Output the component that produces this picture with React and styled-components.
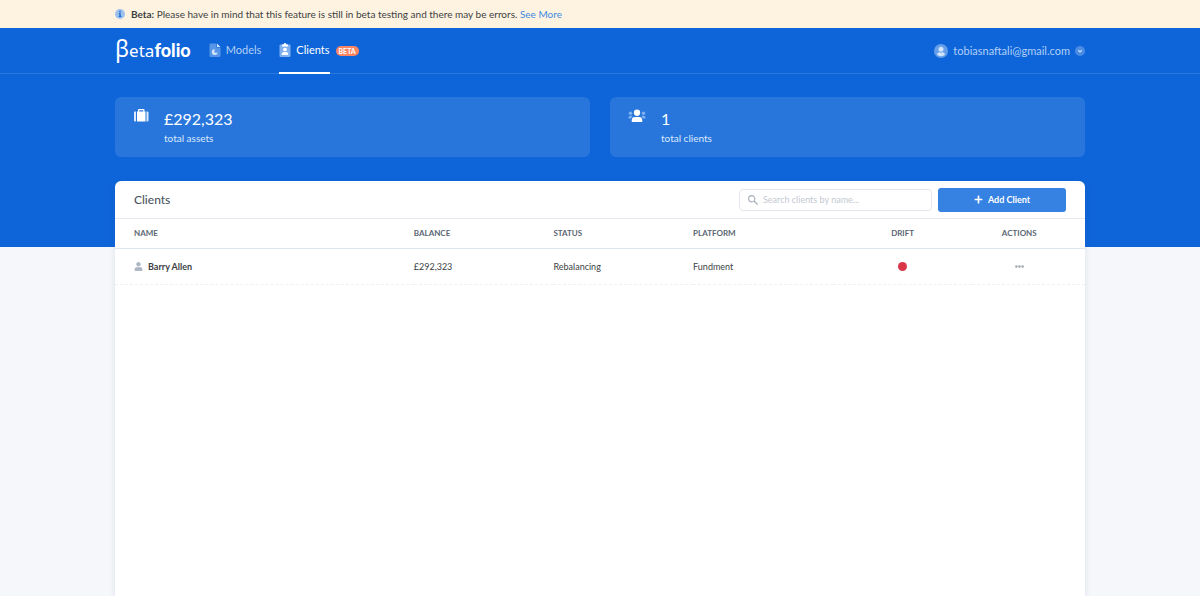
import { useState } from "react";
import styled, { createGlobalStyle } from "styled-components";
import { FaPlus, FaUser, FaEllipsisH } from "react-icons/fa";

const GlobalStyle = createGlobalStyle`
  * {
    box-sizing: border-box;
  }
  body {
    margin: 0;
    background: #f5f7fb;
    color: #3b3f44;
    font-family: Lato, "Liberation Sans", sans-serif;
    font-size: 10px;
  }
  button, input {
    font-family: inherit;
  }
`;

const Page = styled.div`
  display: flex;
  flex-direction: column;
  min-height: 100vh;
`;

const Container = styled.div`
  width: 100%;
  max-width: 970px;
  margin: 0 auto;
`;

const Banner = styled.div`
  background: #fef3e0;
`;

const BannerContent = styled(Container)`
  display: flex;
  align-items: center;
  gap: 6px;
  height: 28px;
  font-size: 10px;
  line-height: 16px;

  a {
    color: #3f8ae0;
    text-decoration: none;
  }
`;

const Hero = styled.div`
  height: 219px;
  background: #0e65d9;
`;

const Header = styled.header`
  border-bottom: 1px solid #2b77de;
`;

const HeaderContent = styled(Container)`
  display: flex;
  align-items: center;
  height: 45px;
`;

const Logo = styled.a`
  display: flex;
  align-items: baseline;
  margin-right: 18px;
  padding-bottom: 2px;
  color: #fff;
  font-family: "Noto Sans", sans-serif;
  font-size: 17px;
  font-weight: 400;
  line-height: 24px;
  text-decoration: none;

  strong {
    font-family: Lato, sans-serif;
    font-size: 18px;
    font-weight: 900;
  }
`;

const LogoBeta = styled.span`
  font-size: 23px;
`;

const Nav = styled.nav`
  display: flex;
  align-self: stretch;
  gap: 18px;
`;

const NavLink = styled.a`
  display: flex;
  align-items: center;
  gap: 5px;
  margin-bottom: -1px;
  border-bottom: 2px solid ${(props) => (props.$active ? "#fff" : "transparent")};
  color: ${(props) => (props.$active ? "#fff" : "#b1d0f6")};
  font-size: 11px;
  line-height: 16px;
  text-decoration: none;
`;

const Badge = styled.span`
  align-self: center;
  margin-left: -12px;
  padding: 0 3px;
  border-radius: 5px;
  background: #fc8563;
  color: #fff;
  font-size: 7px;
  font-weight: 700;
  line-height: 10px;
`;

const Account = styled.button`
  display: flex;
  align-items: center;
  gap: 5px;
  margin-left: auto;
  padding: 0;
  border: 0;
  background: none;
  color: #b1d0f6;
  font-size: 11px;
  line-height: 16px;
  cursor: pointer;
`;

const Stats = styled(Container)`
  display: grid;
  grid-template-columns: 1fr 1fr;
  gap: 20px;
  margin-top: 23px;
`;

const StatCard = styled.section`
  display: flex;
  gap: 15px;
  padding: 12px 18px 10px;
  border-radius: 6px;
  background: #2876dc;
  color: #fff;
`;

const StatValue = styled.div`
  font-size: 16px;
  line-height: 20px;
`;

const StatLabel = styled.div`
  color: #dceafb;
  font-size: 10px;
  line-height: 18px;
`;

const Panel = styled(Container)`
  flex: 1;
  margin-top: -66px;
  border-radius: 6px 6px 0 0;
  background: #fff;
  box-shadow: 0 2px 6px rgba(40, 60, 90, 0.12);
`;

const PanelHeader = styled.div`
  display: flex;
  align-items: center;
  gap: 6px;
  height: 38px;
  padding: 0 19px;
  border-bottom: 1px solid #e4e9f0;
`;

const PanelTitle = styled.h1`
  margin: 0 auto 0 0;
  color: #4b5661;
  font-size: 12px;
  font-weight: 500;
  line-height: 16px;
`;

const SearchBox = styled.label`
  display: flex;
  align-items: center;
  gap: 5px;
  width: 193px;
  height: 22px;
  padding: 0 8px;
  border: 1px solid #e4e8ee;
  border-radius: 4px;
`;

const SearchInput = styled.input`
  flex: 1;
  min-width: 0;
  padding: 0;
  border: 0;
  outline: 0;
  background: none;
  color: #3b3f44;
  font-size: 9px;

  &::placeholder {
    color: #c3c9d1;
  }
`;

const AddButton = styled.button`
  display: flex;
  align-items: center;
  justify-content: center;
  gap: 5px;
  width: 128px;
  height: 24px;
  border: 0;
  border-radius: 3px;
  background: #3682e3;
  color: #fff;
  font-size: 9px;
  font-weight: 700;
  cursor: pointer;
`;

const Table = styled.table`
  width: 100%;
  border-collapse: separate;
  border-spacing: 0;
  table-layout: fixed;
`;

const Th = styled.th`
  width: ${(props) => props.$width};
  height: 30px;
  padding: 0 0 1px;
  border-bottom: 1px solid #dfe5ee;
  color: #5a6673;
  font-size: 8px;
  font-weight: 700;
  line-height: 10px;
  text-align: ${(props) => (props.$center ? "center" : "left")};
  text-transform: uppercase;

  &:first-child {
    padding-left: 19px;
  }
  &:last-child {
    padding-right: 19px;
  }
`;

const Td = styled.td`
  height: 36px;
  padding: 0;
  border-bottom: 1px dashed #eef0f3;
  font-size: 9px;
  line-height: 12px;
  text-align: ${(props) => (props.$center ? "center" : "left")};

  &:first-child {
    padding-left: 19px;
  }
  &:last-child {
    padding-right: 19px;
  }
`;

const ClientName = styled.div`
  display: flex;
  align-items: center;
  gap: 5px;
  font-weight: 700;
`;

const DriftDot = styled.span`
  display: block;
  width: 9px;
  height: 9px;
  margin: 0 auto;
  border-radius: 50%;
  background: #d9364a;
`;

const MoreButton = styled.button`
  display: block;
  margin: 0 auto;
  padding: 0;
  border: 0;
  background: none;
  color: #a3a9b1;
  font-size: 9px;
  line-height: 9px;
  cursor: pointer;
`;

const InfoIcon = () => (
  <svg width="10" height="10" viewBox="0 0 20 20" aria-hidden="true">
    <circle cx="10" cy="10" r="10" fill="#9fc1ee" />
    <circle cx="10" cy="5.4" r="1.7" fill="#1c66cc" />
    <path d="M7.5 8.5h4v5.5h1.3v2H7.3v-2h1.3v-3.5H7.5z" fill="#1c66cc" />
  </svg>
);

const ModelsIcon = () => (
  <svg width="12" height="14" viewBox="0 0 24 28" aria-hidden="true">
    <path d="M3 1h12v8h8v17a2 2 0 0 1-2 2H3a2 2 0 0 1-2-2V3a2 2 0 0 1 2-2z" fill="#5795e8" />
    <path d="M16 1l7 7h-7z" fill="#d2e4fb" />
    <path d="M11 12a6 6 0 1 0 6.500 7.500H11z" fill="#d2e4fb" />
  </svg>
);

const ClientsIcon = () => (
  <svg width="12" height="14" viewBox="0 0 24 28" aria-hidden="true">
    <rect x="1" y="3" width="22" height="25" rx="2" fill="#7fb0ef" />
    <path d="M6 3h3a3 3 0 0 1 6 0h3v4H6z" fill="#fff" />
    <circle cx="12" cy="13" r="3.7" fill="#fff" />
    <path d="M5.5 24v-1.5a4.5 4.5 0 0 1 4.5-4.5h4a4.5 4.5 0 0 1 4.5 4.5V24z" fill="#fff" />
  </svg>
);

const AvatarIcon = () => (
  <svg width="14" height="14" viewBox="0 0 28 28" aria-hidden="true">
    <circle cx="14" cy="14" r="14" fill="#659ee9" />
    <circle cx="14" cy="10.5" r="5" fill="#d2e4fb" />
    <path d="M6 21c1-3 3-4.5 5-4.5 2 1 4 1 6 0 2 0 4 1.5 5 4.5-4 4.5-12 4.5-16 0z" fill="#d2e4fb" />
  </svg>
);

const ChevronIcon = () => (
  <svg width="10" height="10" viewBox="0 0 20 20" aria-hidden="true">
    <circle cx="10" cy="10" r="10" fill="#4a8ce5" />
    <path d="M6.5 8.5l3.5 3.5 3.5-3.5" fill="none" stroke="#c6dcf8" strokeWidth="2.2" />
  </svg>
);

const SuitcaseIcon = () => (
  <svg width="16" height="14" viewBox="0 0 32 28" aria-hidden="true">
    <path d="M4 5h2v20H4a2 2 0 0 1-2-2V7a2 2 0 0 1 2-2zM27 5h2a2 2 0 0 1 2 2v16a2 2 0 0 1-2 2h-2z" fill="#dceafb" />
    <path d="M8 5h2V2a2 2 0 0 1 2-2h9a2 2 0 0 1 2 2v3h2v20H8zM12.5 5h8V2.5h-8z" fill="#fff" />
  </svg>
);

const GroupIcon = () => (
  <svg width="18" height="14" viewBox="0 0 36 28" aria-hidden="true">
    <g fill="#7fb0ef">
      <circle cx="5" cy="8.5" r="3.5" />
      <circle cx="31" cy="8.5" r="3.5" />
      <path d="M1 19v-2a3.5 3.5 0 0 1 3.5-3.5h3L9 15l-3 4zM35 19v-2a3.5 3.5 0 0 0-3.5-3.5h-3L27 15l3 4z" />
    </g>
    <circle cx="18" cy="7.5" r="6.3" fill="#fff" />
    <path d="M7.5 26v-3.5a6.5 6.5 0 0 1 6.5-6.5h8a6.5 6.5 0 0 1 6.5 6.5V26z" fill="#fff" />
  </svg>
);

const SearchIcon = () => (
  <svg width="10" height="10" viewBox="0 0 20 20" fill="none" aria-hidden="true">
    <circle cx="7.5" cy="7.5" r="6.2" stroke="#a5adb8" strokeWidth="2.2" />
    <path d="M12 12l7 7" stroke="#a5adb8" strokeWidth="2.4" />
  </svg>
);

const clients = [
  { name: "Barry Allen", balance: "£292,323", status: "Rebalancing", platform: "Fundment" },
];

const App = () => {
  const [searchTerm, setSearchTerm] = useState("");

  const filteredClients = clients.filter((client) =>
    client.name.toLowerCase().includes(searchTerm.toLowerCase())
  );

  return (
    <Page>
      <GlobalStyle />
      <Banner>
        <BannerContent>
          <InfoIcon />
          <span>
            <b>Beta:</b> Please have in mind that this feature is still in beta testing and there may be errors.{" "}
            <a href="#more">See More</a>
          </span>
        </BannerContent>
      </Banner>
      <Hero>
        <Header>
          <HeaderContent>
            <Logo href="#home">
              <LogoBeta>β</LogoBeta>eta<strong>folio</strong>
            </Logo>
            <Nav>
              <NavLink href="#models">
                <ModelsIcon />
                Models
              </NavLink>
              <NavLink href="#clients" $active>
                <ClientsIcon />
                Clients
              </NavLink>
              <Badge>BETA</Badge>
            </Nav>
            <Account type="button">
              <AvatarIcon />
              tobiasnaftali@gmail.com
              <ChevronIcon />
            </Account>
          </HeaderContent>
        </Header>
        <Stats>
          <StatCard>
            <SuitcaseIcon />
            <div>
              <StatValue>£292,323</StatValue>
              <StatLabel>total assets</StatLabel>
            </div>
          </StatCard>
          <StatCard>
            <GroupIcon />
            <div>
              <StatValue>1</StatValue>
              <StatLabel>total clients</StatLabel>
            </div>
          </StatCard>
        </Stats>
      </Hero>
      <Panel as="main">
        <PanelHeader>
          <PanelTitle>Clients</PanelTitle>
          <SearchBox>
            <SearchIcon />
            <SearchInput
              type="text"
              aria-label="Search clients by name"
              placeholder="Search clients by name..."
              value={searchTerm}
              onChange={(e) => setSearchTerm(e.target.value)}
            />
          </SearchBox>
          <AddButton type="button">
            <FaPlus />
            Add Client
          </AddButton>
        </PanelHeader>
        <Table>
          <thead>
            <tr>
              <Th $width="30.8%">Name</Th>
              <Th $width="14.4%">Balance</Th>
              <Th $width="14.4%">Status</Th>
              <Th $width="14.4%">Platform</Th>
              <Th $width="14.4%" $center>Drift</Th>
              <Th $center>Actions</Th>
            </tr>
          </thead>
          <tbody>
            {filteredClients.map((client) => (
              <tr key={client.name}>
                <Td>
                  <ClientName>
                    <FaUser color="#aeb8c4" />
                    {client.name}
                  </ClientName>
                </Td>
                <Td>{client.balance}</Td>
                <Td>{client.status}</Td>
                <Td>{client.platform}</Td>
                <Td $center>
                  <DriftDot />
                </Td>
                <Td $center>
                  <MoreButton type="button" aria-label="Actions">
                    <FaEllipsisH />
                  </MoreButton>
                </Td>
              </tr>
            ))}
          </tbody>
        </Table>
      </Panel>
    </Page>
  );
};

export default App;
